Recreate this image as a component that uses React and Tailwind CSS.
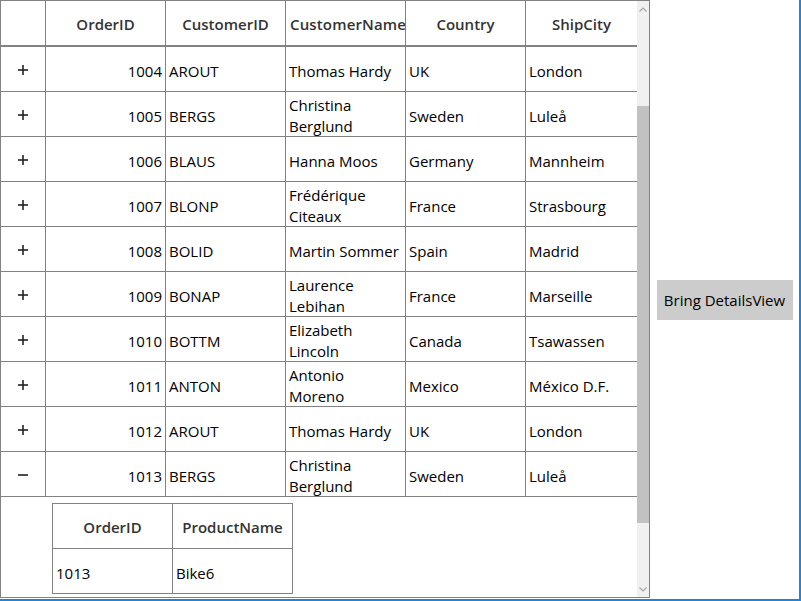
import React from 'react';

const rows = [
  { id: 1004, cust: 'AROUT', name: ['Thomas Hardy'], country: 'UK', city: 'London' },
  { id: 1005, cust: 'BERGS', name: ['Christina', 'Berglund'], country: 'Sweden', city: 'Luleå' },
  { id: 1006, cust: 'BLAUS', name: ['Hanna Moos'], country: 'Germany', city: 'Mannheim' },
  { id: 1007, cust: 'BLONP', name: ['Frédérique', 'Citeaux'], country: 'France', city: 'Strasbourg' },
  { id: 1008, cust: 'BOLID', name: ['Martin Sommer'], country: 'Spain', city: 'Madrid' },
  { id: 1009, cust: 'BONAP', name: ['Laurence', 'Lebihan'], country: 'France', city: 'Marseille' },
  { id: 1010, cust: 'BOTTM', name: ['Elizabeth', 'Lincoln'], country: 'Canada', city: 'Tsawassen' },
  { id: 1011, cust: 'ANTON', name: ['Antonio', 'Moreno'], country: 'Mexico', city: 'México D.F.' },
  { id: 1012, cust: 'AROUT', name: ['Thomas Hardy'], country: 'UK', city: 'London' },
  { id: 1013, cust: 'BERGS', name: ['Christina', 'Berglund'], country: 'Sweden', city: 'Luleå', open: true },
];

const font = { fontFamily: '"Open Sans", "Noto Sans", sans-serif' };

function Expander({ open }) {
  return (
    <svg width="10" height="10" viewBox="0 0 10 10">
      <line x1="0" y1="5" x2="10" y2="5" stroke="#222" strokeWidth="1.6" />
      {!open && <line x1="5" y1="0" x2="5" y2="10" stroke="#222" strokeWidth="1.6" />}
    </svg>
  );
}

function HeaderCell({ children, w, left, last }) {
  return (
    <div
      className={`${w} h-full shrink-0 flex items-center pt-[2px] overflow-hidden whitespace-nowrap font-semibold text-[#333] ${
        left ? 'justify-start pl-[4px] tracking-[0.15px]' : 'justify-center'
      } ${last ? '' : 'border-r border-[#828282]'}`}
    >
      {children}
    </div>
  );
}

function Cell({ children, w, right, last }) {
  return (
    <div
      className={`${w} h-full shrink-0 flex flex-col justify-center pt-[4px] overflow-hidden whitespace-nowrap leading-[21px] text-black ${
        right ? 'items-end pr-[3px]' : 'items-start pl-[3px]'
      } ${last ? '' : 'border-r border-[#828282]'}`}
    >
      {children}
    </div>
  );
}

function DetailsView() {
  return (
    <div className="ml-[51px] mt-[6px] w-[241px] border border-[#828282]">
      <div className="flex h-[45px] border-b border-[#828282]">
        <HeaderCell w="w-[120px]">OrderID</HeaderCell>
        <HeaderCell w="w-[119px]" last>ProductName</HeaderCell>
      </div>
      <div className="flex h-[44px]">
        <Cell w="w-[120px]">1013</Cell>
        <Cell w="w-[119px]" last>
          Bike6
        </Cell>
      </div>
    </div>
  );
}

function Scrollbar() {
  return (
    <div className="w-[12px] h-full bg-[#f0f0f0] flex flex-col items-center shrink-0">
      <div className="h-[16px] flex items-center justify-center">
        <svg width="8" height="5" viewBox="0 0 8 5">
          <polyline points="0.5,4.5 4,1 7.5,4.5" fill="none" stroke="#a6a6a6" strokeWidth="1.2" />
        </svg>
      </div>
      <div className="h-[89px]" />
      <div className="w-full h-[417px] bg-[#c1c1c1]" />
      <div className="flex-1" />
      <div className="h-[16px] flex items-center justify-center">
        <svg width="8" height="5" viewBox="0 0 8 5">
          <polyline points="0.5,0.5 4,4 7.5,0.5" fill="none" stroke="#a6a6a6" strokeWidth="1.2" />
        </svg>
      </div>
    </div>
  );
}

export default function App() {
  return (
    <div
      className="w-[801px] h-[601px] flex bg-white border-r-2 border-b-2 border-[#1e85de] text-[15px]"
      style={font}
    >
      {/* Master grid */}
      <div className="w-[650px] h-[598px] shrink-0 flex border border-[#828282]">
        <div className="w-[636px] h-full overflow-hidden flex flex-col">
          <div className="flex h-[46px] shrink-0 border-b-2 border-[#828282]">
            <HeaderCell w="w-[45px]" />
            <HeaderCell w="w-[120px]">OrderID</HeaderCell>
            <HeaderCell w="w-[120px]">CustomerID</HeaderCell>
            <HeaderCell w="w-[120px]" left>CustomerName</HeaderCell>
            <HeaderCell w="w-[120px]">Country</HeaderCell>
            <HeaderCell w="w-[111px]" last>ShipCity</HeaderCell>
          </div>
          {rows.map((r) => (
            <div key={r.id} className="flex h-[45px] shrink-0 border-b border-[#828282]">
              <div className="w-[45px] h-full shrink-0 flex items-center justify-center pt-[1px] border-r border-[#828282]">
                <Expander open={r.open} />
              </div>
              <Cell w="w-[120px]" right>{r.id}</Cell>
              <Cell w="w-[120px]">{r.cust}</Cell>
              <Cell w="w-[120px]">
                {r.name.map((n) => (
                  <span key={n}>{n}</span>
                ))}
              </Cell>
              <Cell w="w-[120px]">{r.country}</Cell>
              <Cell w="w-[111px]" last>
                {r.city}
              </Cell>
            </div>
          ))}
          <div className="flex-1">
            <DetailsView />
          </div>
        </div>
        <Scrollbar />
      </div>
      <div className="flex-1 flex items-center justify-center">
        <button className="w-[136px] h-[40px] bg-[#cccccc] text-black text-[15px] pt-[1px]">
          Bring DetailsView
        </button>
      </div>
    </div>
  );
}
